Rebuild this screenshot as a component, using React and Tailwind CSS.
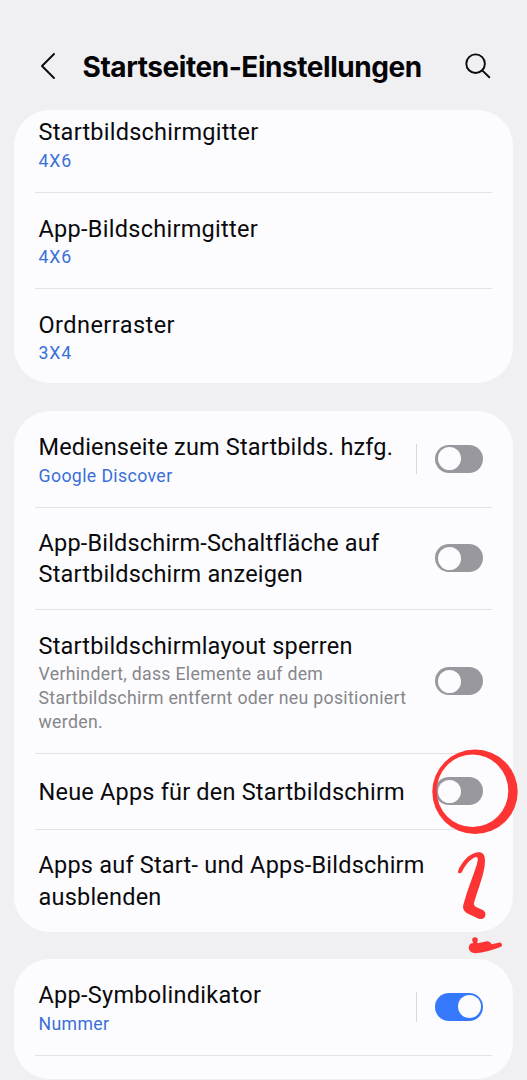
import clsx from "clsx";

const cards = [
  {
    className: "h-[273px]",
    rows: [
      { lines: ["Startbildschirmgitter"], tracking: "tracking-[0.24px]", value: "4X6", valueTracking: "tracking-[0.9px]", height: "h-[82px] pb-[19.5px] items-end" },
      { lines: ["App-Bildschirmgitter"], tracking: "tracking-[0.28px]", value: "4X6", valueTracking: "tracking-[0.9px]", height: "h-[95px] items-center" },
      { lines: ["Ordnerraster"], tracking: "tracking-[0.45px]", value: "3X4", valueTracking: "tracking-[0.9px]", height: "h-[95px] items-center" },
    ],
  },
  {
    className: "h-[521px] mt-7",
    rows: [
      { lines: ["Medienseite zum Startbilds. hzfg."], tracking: "tracking-[0.16px]", value: "Google Discover", valueTracking: "tracking-[0.38px]", toggle: "off", split: true, height: "h-[96px] items-center" },
      { lines: ["App-Bildschirm-Schaltfläche auf", "Startbildschirm anzeigen"], tracking: "tracking-[0.18px]", toggle: "off", height: "h-[101px] items-center" },
      {
        lines: ["Startbildschirmlayout sperren"],
        tracking: "tracking-[0.2px]",
        description: ["Verhindert, dass Elemente auf dem", "Startbildschirm entfernt oder neu positioniert", "werden."],
        toggle: "off",
        height: "h-[143px] items-center",
      },
      { lines: ["Neue Apps für den Startbildschirm"], tracking: "tracking-[0.2px]", toggle: "off", height: "h-[75px] items-center", marked: true },
      { lines: ["Apps auf Start- und Apps-Bildschirm", "ausblenden"], tracking: "tracking-[0.21px]", height: "h-[102px] items-center", numbered: true },
    ],
  },
  {
    className: "h-[120px] mt-[27px]",
    rows: [
      { lines: ["App-Symbolindikator"], tracking: "tracking-[0.28px]", value: "Nummer", valueTracking: "tracking-[0.35px]", toggle: "on", split: true, height: "h-[96px] items-center" },
      { lines: [], height: "h-[23px]" },
    ],
  },
];

function Toggle({ on }) {
  return (
    <span
      className={clsx(
        "mb-px flex h-7 w-12 items-center rounded-full px-[2.5px]",
        on ? "justify-end bg-[#3578fb]" : "justify-start bg-[#99989e]"
      )}
    >
      <span className="h-[23px] w-[23px] rounded-full bg-[#fcfcff]" />
    </span>
  );
}

// red ring around the switch
function Ring() {
  return (
    <svg className="absolute left-[418px] top-[-5px]" width="88" height="88" viewBox="432 749 88 88">
      <path
        fill="#fd3434"
        fillRule="evenodd"
        d="M432.3 791.8a42.7 42.2 0 1 0 85.4 0a42.7 42.2 0 1 0 -85.4 0ZM436.7 790.8a35.8 36.2 0 1 0 71.6 0a35.8 36.2 0 1 0 -71.6 0Z"
      />
    </svg>
  );
}

// handwritten "2."
function Scribble() {
  return (
    <svg className="absolute left-[416px] top-[10px]" width="97" height="120" viewBox="0 0 291 360">
      <g fill="#fd3434">
        <path d="M84 94C88 80 98 66 110 54C122 43 140 34 154 38C166 42 166 60 164 78C158 115 142 155 132 188C130 194 134 198 140 202L158 210C169 215 168 228 162 234C158 238 152 238 146 236L114 221C102 215 97 206 100 194C112 150 128 112 141 72C143 62 146 52 138 51C122 56 106 74 96 96C92 102 82 101 84 94Z" />
        <circle cx="135" cy="300" r="8.5" />
        <path d="M129 304H141L142 310L165 305C174 301 183 306 185 313L206 308C214 306 220 315 213 320C190 330 160 337 136 340C122 340 112 328 118 316C120 311 125 309 130 309Z" />
      </g>
    </svg>
  );
}

function Row({ row, last }) {
  return (
    <div className="relative">
      <div className={clsx("flex pl-[24.5px] pr-[30px]", row.height)}>
        <div className="min-w-0 flex-1 whitespace-nowrap pt-[1.5px]">
          {row.lines.map((line) => (
            <p key={line} className={clsx("text-[23.5px] leading-[31.5px] text-[#0a0a0c]", row.tracking)}>
              {line}
            </p>
          ))}
          {row.value && (
            <p className={clsx("text-[17.7px] leading-6 text-[#3a6fd8]", row.valueTracking)}>{row.value}</p>
          )}
          {row.description?.map((line) => (
            <p key={line} className="text-[17.7px] leading-6 tracking-[0.31px] text-[#86868a]">
              {line}
            </p>
          ))}
        </div>
        {row.split && <span className="mr-[18px] h-[30px] w-px shrink-0 bg-[#d8d8dc]" />}
        {row.toggle && <Toggle on={row.toggle === "on"} />}
      </div>
      {!last && <div className="mx-[21px] h-px bg-[#e3e3e6]" />}
      {row.marked && <Ring />}
      {row.numbered && <Scribble />}
    </div>
  );
}

export default function App() {
  return (
    <div className="h-[1080px] w-[527px] overflow-hidden bg-[#f0f0f2] font-['Roboto',sans-serif]">
      <header className="flex h-[110px] items-center pt-[22px] pl-[40px] pr-[36px]">
        <svg width="16" height="28" viewBox="0 0 16 28" fill="none" stroke="#0a0a0c" strokeWidth="1.9" strokeLinecap="round" strokeLinejoin="round">
          <path d="M14 2L2 14L14 26" />
        </svg>
        <h1 className="ml-[26.5px] flex-1 whitespace-nowrap pt-px font-['Inter',sans-serif] text-[28px] font-bold leading-9 tracking-[-0.44px] text-[#050507]">
          Startseiten-Einstellungen
        </h1>
        <svg width="26" height="26" viewBox="0 0 26 26" fill="none" stroke="#0a0a0c" strokeWidth="1.9" strokeLinecap="round">
          <circle cx="10.6" cy="10.7" r="9.3" />
          <path d="M17.2 17.4L24.3 24.3" />
        </svg>
      </header>

      <main className="px-[14px]">
        {cards.map((card, i) => (
          <section key={i} className={clsx("rounded-[36px] bg-[#fcfcff]", card.className)}>
            {card.rows.map((row, j) => (
              <Row key={j} row={row} last={j === card.rows.length - 1} />
            ))}
          </section>
        ))}
      </main>
    </div>
  );
}
